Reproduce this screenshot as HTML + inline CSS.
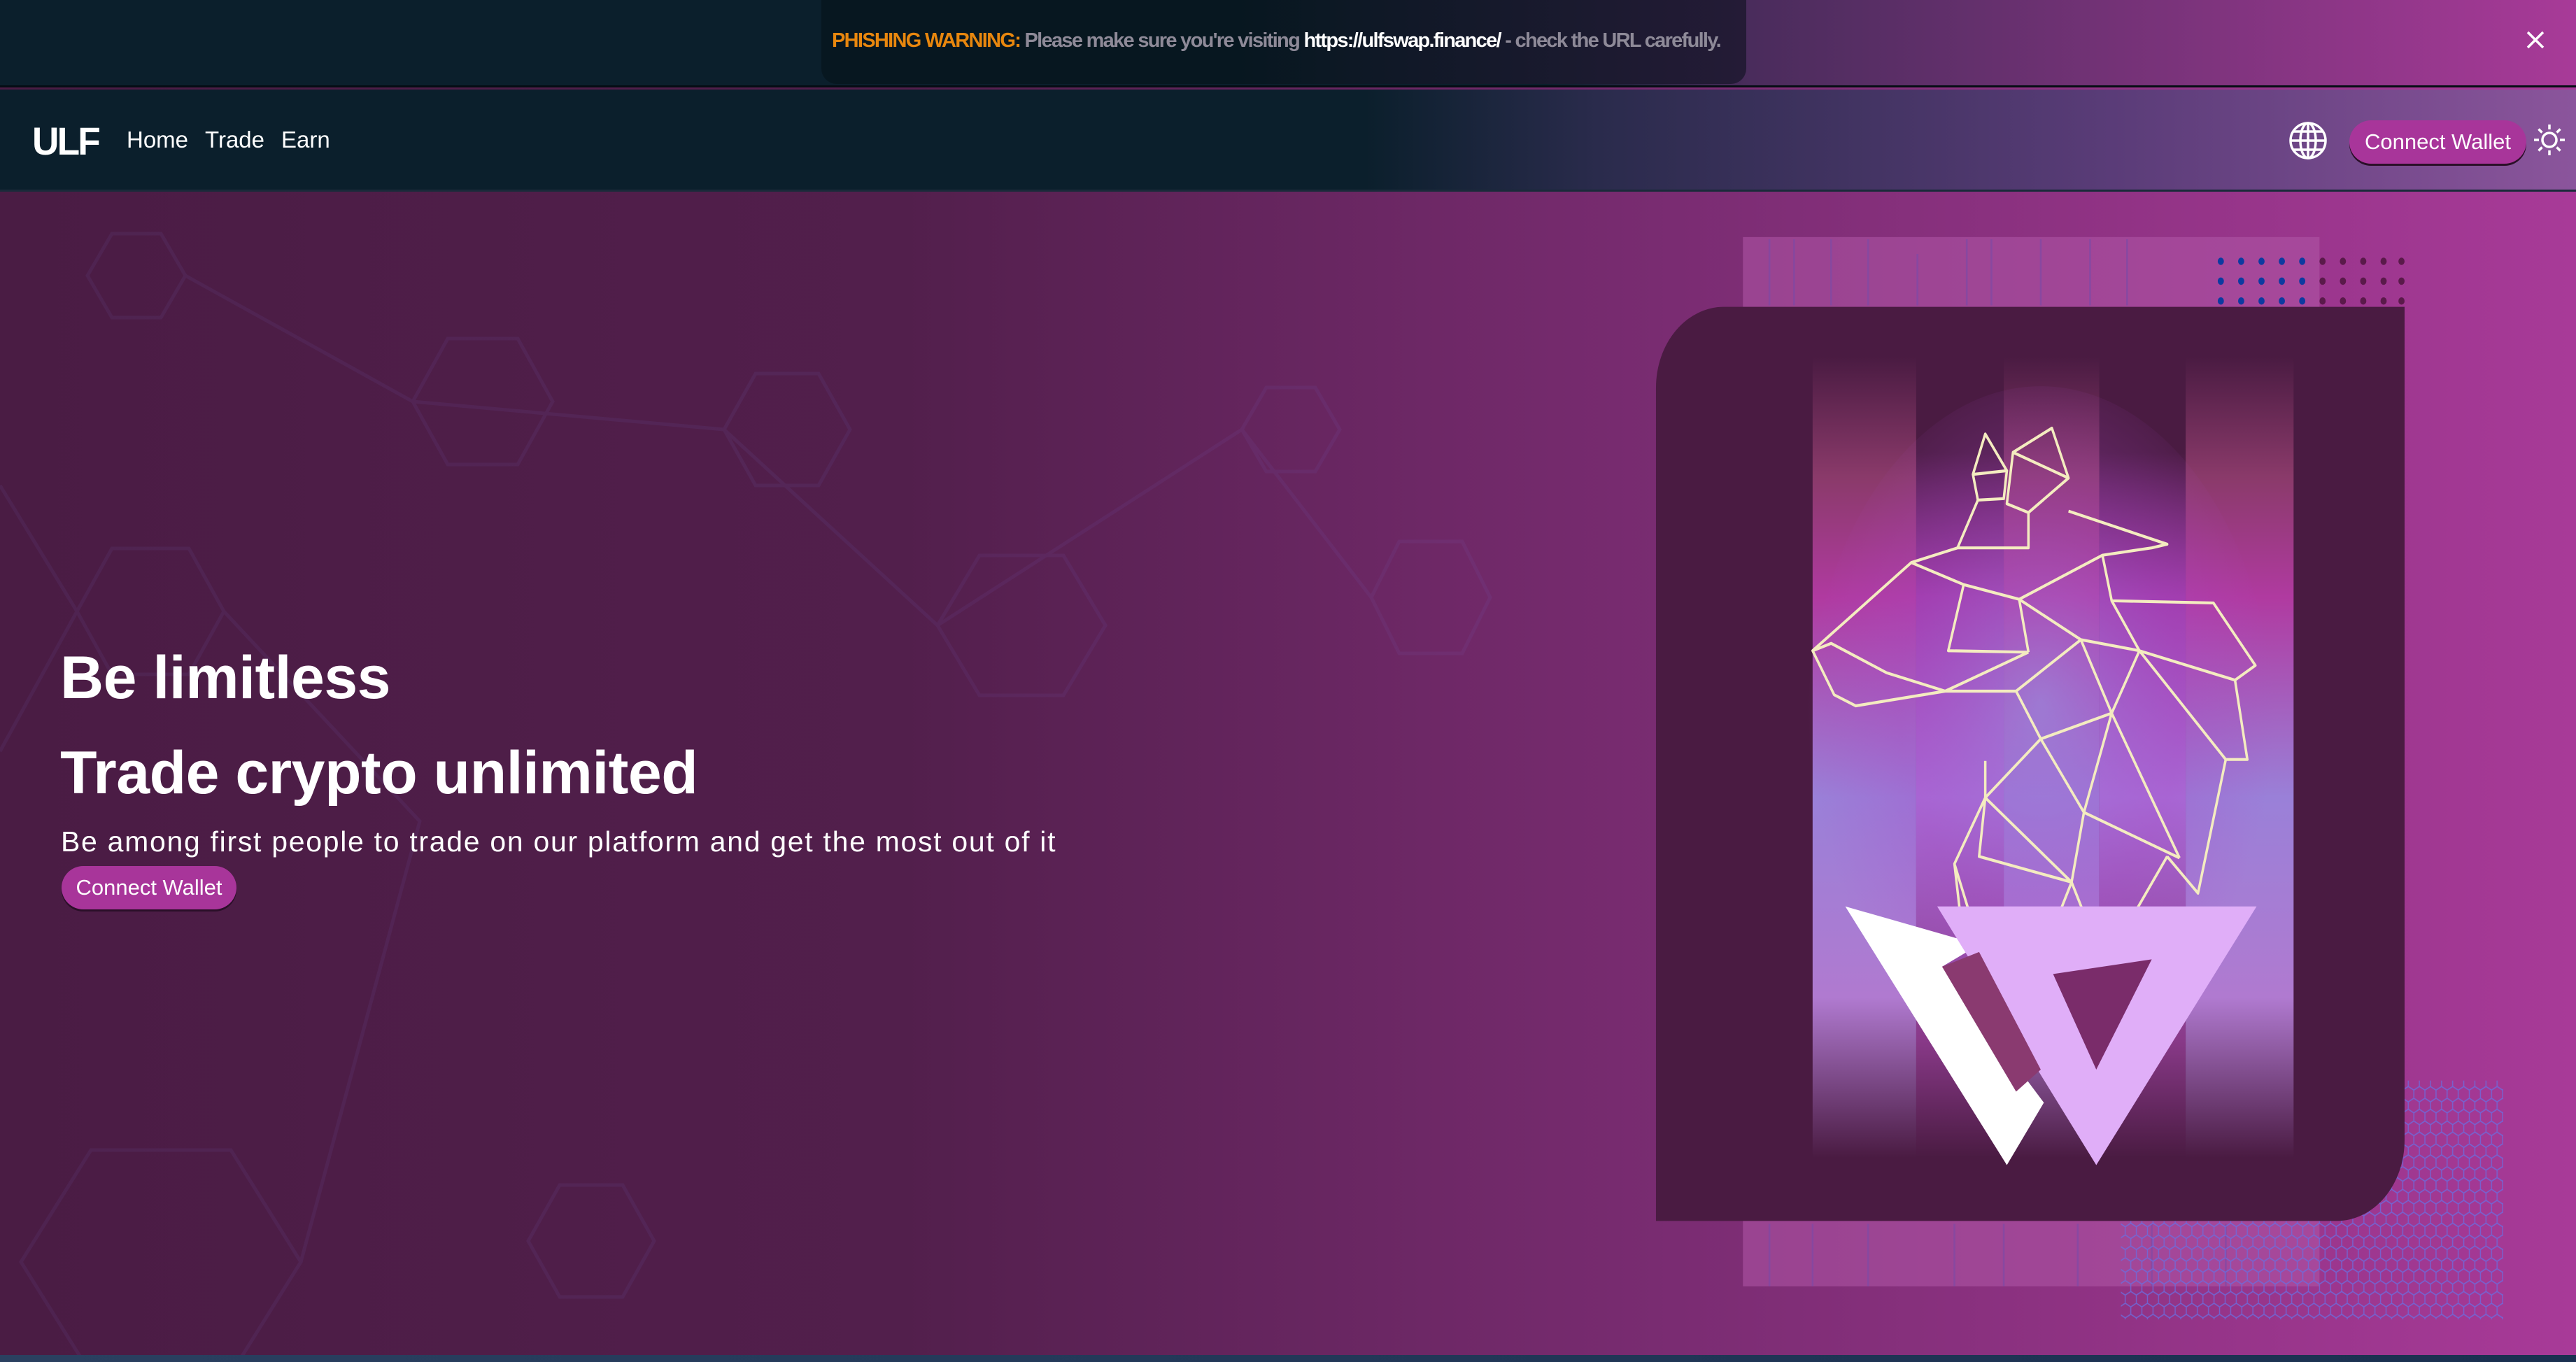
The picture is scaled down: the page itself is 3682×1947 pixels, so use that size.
<!DOCTYPE html>
<html><head><meta charset="utf-8">
<style>
*{margin:0;padding:0;box-sizing:border-box}
html,body{width:3682px;height:1947px;overflow:hidden}
body{font-family:"Liberation Sans",sans-serif;position:relative;background:linear-gradient(90deg,#4a1c44 0%,#521f4c 35%,#7a2c72 65%,#a83a98 100%)}
.warn{position:absolute;left:0;top:0;width:3682px;height:125px;background:linear-gradient(90deg,#0b1f2c 0%,#0b1f2c 60%,#4a2c5c 68%,#a83a98 100%);border-bottom:3px solid #050d14}
.pill{position:absolute;left:1174px;top:0;width:1322px;height:120px;border-radius:0 0 22px 22px;background:linear-gradient(90deg,#071720,#071720 45%,#241b36);}
.wt{position:absolute;left:1189px;top:42px;font-size:29px;font-weight:bold;color:#8e8a98;white-space:nowrap;letter-spacing:-1.7px}
.wt b{color:#e8870e}.wt i{font-style:normal;color:#fff}
.close{position:absolute;left:3610px;top:43px;width:28px;height:28px}
.nav{position:absolute;left:0;top:128px;width:3682px;height:146px;background:linear-gradient(90deg,#0b1f2c 0%,#0b1f2c 53%,#2a2b4c 62%,#5a3c78 82%,#8b559c 100%);border-bottom:3px solid #1a2a3a}
.links{position:absolute;top:53px;left:181px;font-size:33px;color:#fff}
.links span{margin-right:24px}
.btn{position:absolute;background:#a8359a;color:#fff;border-radius:34px;font-size:31px;text-align:center;box-shadow:0 3px 0 #2a0f28}
h1{position:absolute;left:86px;color:#fff;font-size:86px;font-weight:bold;letter-spacing:-0.5px;white-space:nowrap}
.sub{position:absolute;left:87px;top:1180px;color:#fff;font-size:41px;white-space:nowrap;letter-spacing:1.7px}
</style></head><body>
<svg style="position:absolute;left:0;top:274px" width="2400" height="1673" opacity="0.09">
<g fill="none" stroke="#7a6acd" stroke-width="5">
<polygon points="160,60 230,60 265,120 230,180 160,180 125,120"/>
<polygon points="640,210 740,210 790,300 740,390 640,390 590,300"/>
<polygon points="1080,260 1170,260 1215,340 1170,420 1080,420 1035,340"/>
<polygon points="1400,520 1520,520 1580,620 1520,720 1400,720 1340,620"/>
<polygon points="160,510 270,510 320,600 270,690 160,690 110,600"/>
<polygon points="130,1370 330,1370 430,1530 330,1690 130,1690 30,1530"/>
<polygon points="1810,280 1880,280 1915,340 1880,400 1810,400 1775,340"/>
<polygon points="2000,500 2090,500 2130,580 2090,660 2000,660 1960,580"/>
<polygon points="800,1420 890,1420 935,1500 890,1580 800,1580 755,1500"/>
<polyline points="265,120 590,300 1035,340 1340,620 1775,340 1960,580"/>
<polyline points="320,600 600,900 430,1530"/>
<polyline points="0,420 110,600 0,800"/>
</g></svg>

<div class="warn"><div class="pill"></div>
<div class="wt"><b>PHISHING WARNING:</b> Please make sure you're visiting <i>https://ulfswap.finance/</i> - check the URL carefully.</div>
<svg class="close" viewBox="0 0 28 28"><path d="M3 3L25 25M25 3L3 25" stroke="#fff" stroke-width="3.5"/></svg>
</div>

<div class="nav">
<div style="position:absolute;left:46px;top:48px;font-size:56px;font-weight:900;color:#fff;letter-spacing:-3px;line-height:52px;transform:scaleX(0.95);transform-origin:left">ULF</div>
<div class="links"><span>Home</span><span>Trade</span><span>Earn</span></div>
<svg style="position:absolute;left:3271px;top:45px" width="56" height="56" viewBox="0 0 56 56"><g fill="none" stroke="#fff" stroke-width="3.5"><circle cx="28" cy="28" r="25"/><ellipse cx="28" cy="28" rx="11" ry="25"/><path d="M3 28H53M28 3V53M7 15H49M7 41H49"/></g></svg>
<div class="btn" style="left:3358px;top:44px;width:253px;height:62px;line-height:62px">Connect Wallet</div>
<svg style="position:absolute;left:3620px;top:48px" width="48" height="48" viewBox="0 0 48 48"><g fill="none" stroke="#fff" stroke-width="3.5"><circle cx="24" cy="24" r="10"/><path d="M24 2V9M24 39V46M2 24H9M39 24H46M8.5 8.5L13.5 13.5M34.5 34.5L39.5 39.5M8.5 39.5L13.5 34.5M34.5 13.5L39.5 8.5"/></g></svg>
</div>

<h1 style="top:920px">Be limitless</h1>
<h1 style="top:1056px">Trade crypto unlimited</h1>
<div class="sub">Be among first people to trade on our platform and get the most out of it</div>
<div class="btn" style="left:88px;top:1238px;width:250px;height:62px;line-height:62px">Connect Wallet</div>

<svg style="position:absolute;left:2300px;top:300px" width="1382" height="1647" viewBox="0 0 1568 1568" preserveAspectRatio="none">
<defs>
<pattern id="hx" width="18" height="31" patternUnits="userSpaceOnUse"><path d="M0 5L9 0L18 5V15L9 20L0 15Z M9 20V31" fill="none" stroke="#6a6ee0" stroke-width="1.6"/></pattern>
<linearGradient id="col" x1="0" y1="0" x2="0" y2="1"><stop offset="0" stop-color="#4a1b42"/><stop offset="0.15" stop-color="#8a3a6a"/><stop offset="0.3" stop-color="#b03aa0"/><stop offset="0.55" stop-color="#9a80d8"/><stop offset="0.8" stop-color="#b07ad0"/><stop offset="1" stop-color="#4a1b42"/></linearGradient>
<linearGradient id="col2" x1="0" y1="0" x2="0" y2="1"><stop offset="0" stop-color="#4a1b42"/><stop offset="0.12" stop-color="#4a1b42"/><stop offset="0.3" stop-color="#a03aa8"/><stop offset="0.55" stop-color="#a870d8"/><stop offset="0.85" stop-color="#8a3a8a"/><stop offset="1" stop-color="#4a1b42"/></linearGradient>
<radialGradient id="glow" cx="0.5" cy="0.45" r="0.5"><stop offset="0" stop-color="#9a8ae0" stop-opacity="0.6"/><stop offset="0.6" stop-color="#a84ac8" stop-opacity="0.3"/><stop offset="1" stop-color="#a84ac8" stop-opacity="0"/></radialGradient>
</defs>
<rect x="217" y="37" width="935" height="1428" fill="#b058a8" opacity="0.55"/>
<g stroke="#7a4aa8" stroke-width="3" opacity="0.6"><path d="M260 40V130M300 40V130M360 40V130M420 40V130M500 60V130M580 40V130M620 40V130M700 40V130M780 40V130M840 40V130M260 1380V1465M330 1380V1465M420 1380V1465M560 1380V1465M640 1380V1465M760 1380V1465M880 1380V1465M1000 1380V1465"/></g>
<g fill="#0d3aa0"><circle cx="992" cy="70" r="5"/><circle cx="1025" cy="70" r="5"/><circle cx="1058" cy="70" r="5"/><circle cx="1091" cy="70" r="5"/><circle cx="1124" cy="70" r="5"/><circle cx="992" cy="97" r="5"/><circle cx="1025" cy="97" r="5"/><circle cx="1058" cy="97" r="5"/><circle cx="1091" cy="97" r="5"/><circle cx="1124" cy="97" r="5"/><circle cx="992" cy="124" r="5"/><circle cx="1025" cy="124" r="5"/><circle cx="1058" cy="124" r="5"/><circle cx="1091" cy="124" r="5"/><circle cx="1124" cy="124" r="5"/></g>
<g fill="#5a1a4a"><circle cx="1157" cy="70" r="5"/><circle cx="1190" cy="70" r="5"/><circle cx="1223" cy="70" r="5"/><circle cx="1256" cy="70" r="5"/><circle cx="1285" cy="70" r="5"/><circle cx="1157" cy="97" r="5"/><circle cx="1190" cy="97" r="5"/><circle cx="1223" cy="97" r="5"/><circle cx="1256" cy="97" r="5"/><circle cx="1285" cy="97" r="5"/><circle cx="1157" cy="124" r="5"/><circle cx="1190" cy="124" r="5"/><circle cx="1223" cy="124" r="5"/><circle cx="1256" cy="124" r="5"/><circle cx="1285" cy="124" r="5"/></g>
<rect x="830" y="1185" width="620" height="325" fill="url(#hx)" opacity="0.8"/>
<path d="M186 132H1290V1266A110 110 0 0 1 1180 1376H76V242A110 110 0 0 1 186 132Z" fill="#4a1b42"/>
<rect x="330" y="200" width="168" height="1090" fill="url(#col)"/>
<rect x="498" y="200" width="142" height="1090" fill="url(#col2)"/>
<rect x="640" y="200" width="155" height="1090" fill="url(#col)"/>
<rect x="795" y="200" width="140" height="1090" fill="url(#col2)"/>
<rect x="935" y="200" width="175" height="1090" fill="url(#col)"/>
<ellipse cx="700" cy="720" rx="380" ry="480" fill="url(#glow)"/>
<g fill="none" stroke="#f4ecc0" stroke-width="4" stroke-linejoin="round">
<path d="M610 305L645 355L590 360L610 305Z M590 360L598 395L640 393L645 355 M655 330L718 297L745 365L680 412L645 400L655 330Z M655 330L745 365 M598 395L565 460L490 480L330 600L365 660L400 675L545 655L680 602 M490 480L575 510L665 530L800 470L880 460L905 455L745 410 M680 412L680 460L565 460 M575 510L550 600L680 602 M665 530L765 585L860 600L815 532L980 535L1048 620L1015 640L1035 748L1000 748L955 930L905 880 M800 470L815 532 M860 600L1015 640 M860 600L1000 748 M765 585L660 655L700 720L815 685L860 600 M765 585L815 685L770 820L925 882 M815 685L925 882 M700 720L610 800L560 890L575 1000 M700 720L770 820 M610 750L610 800L750 915L770 820 M610 800L600 880L750 915L710 1000 M560 890L600 1000 M750 915L790 1000 M905 880L850 960 M330 600L360 590L450 630L545 655 M545 655L660 655 M680 602L665 530"/>
</g>
<polygon points="383,948 645,1300 705,1215 540,1030 600,1000" fill="#fff"/>
<polygon points="600,1000 735,1012 700,1060 770,1120 900,950 860,1000 740,1180 660,1100" fill="#fff"/>
<polygon points="532,948 1050,948 790,1300" fill="#e0aef8"/>
<polygon points="720,1040 880,1020 790,1170" fill="#7a2c6a"/>
<polygon points="540,1030 600,1010 700,1170 660,1200" fill="#8a3a70"/>
</svg>
<div style="position:absolute;left:0;top:1937px;width:3682px;height:10px;background:linear-gradient(90deg,#2a4060,#1a3050)"></div>
</body></html>
